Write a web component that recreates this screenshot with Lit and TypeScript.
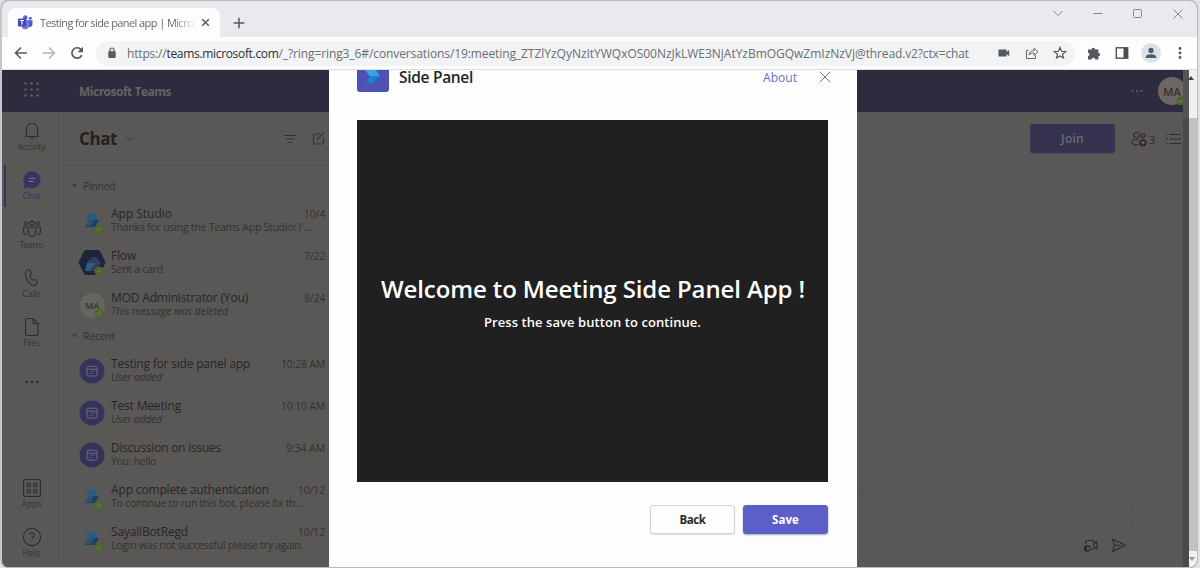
import { LitElement, html, css, svg } from "lit";
import { customElement, property } from "lit/decorators.js";

/** A single line of text, tracked so that it fills the given width. */
@customElement("fit-text")
class FitText extends LitElement {
  static styles = css`
    :host { display: inline-block; white-space: pre; flex: none; }
  `;
  @property({ type: Number }) w = 0;
  @property() text = "";

  render() {
    return html`<span>${this.text}</span>`;
  }
  updated() {
    const span = this.renderRoot.querySelector("span")!;
    span.style.letterSpacing = "0px";
    const natural = span.getBoundingClientRect().width;
    if (this.w) span.style.letterSpacing = `${(this.w - natural) / this.text.length}px`;
  }
}

const t = (text: string, w: number, cls = "") => html`<fit-text class=${cls} .text=${text} .w=${w}></fit-text>`;

const status = html`<svg class="status" width="10" height="10" viewBox="0 0 10 10">
  <circle cx="5" cy="5" r="4.600" fill="#4e662a" />
  <path d="M2.800 5.100l1.600 1.600 2.800-3" fill="none" stroke="#73726c" stroke-width="1.100" />
</svg>`;

const bot = html`<svg width="26" height="26" viewBox="0 0 26 26">
  <path d="M6 5h9l5 7H10z" fill="#2c5c7d" />
  <path d="M10 12h10l-4 7H7l-1-1z" fill="#1d4260" />
  <path d="M10 12h5l-3 6H6z" fill="#28547a" />
</svg>`;

const flow = html`<svg width="28" height="28" viewBox="0 0 28 28">
  <path d="M8 1h12q1.400 0 2 1.200l5 10q.7 1.300 0 2.600l-5 10q-.7 1.200-2 1.200H8q-1.400 0-2-1.200l-5-10q-.7-1.300 0-2.600l5-10Q6.600 1 8 1z" fill="#1b2738" />
  <path d="M14 8h4l5 6-6 8h-4l5-8z" fill="#3a3b60" />
  <path d="M14 8l4 6H9z" fill="#28405f" />
  <path d="M9 14h9l-6 8H7z" fill="#325a7b" />
</svg>`;

const initials = html`<div class="initials">MA</div>`;

const meeting = html`<svg width="26" height="26" viewBox="0 0 26 26">
  <circle cx="13" cy="13" r="12.500" fill="#35335a" />
  <g fill="none" stroke="#6b6986" stroke-width="1">
    <rect x="8" y="8.300" width="10" height="9.700" rx="1.500" />
    <path d="M8 11.200h10" />
    <path d="M12.300 13.300h4M10 15.600h4" stroke-dasharray="1.200 .8" />
  </g>
</svg>`;

interface Chat {
  icon: unknown;
  online?: boolean;
  title: [string, number];
  time: [string, number];
  sub: [string, number];
  italic?: boolean;
}

const pinned: Chat[] = [
  { icon: bot, online: true, title: ["App Studio", 61], time: ["10/4", 21], sub: ["Thanks for using the Teams App Studio! I'...", 200] },
  { icon: flow, online: true, title: ["Flow", 25], time: ["7/22", 21], sub: ["Sent a card", 52] },
  { icon: initials, online: true, title: ["MOD Administrator (You)", 137], time: ["8/24", 21], sub: ["This message was deleted", 117], italic: true },
];

const recent: Chat[] = [
  { icon: meeting, title: ["Testing for side panel app", 139], time: ["10:28 AM", 44], sub: ["User added", 51], italic: true },
  { icon: meeting, title: ["Test Meeting", 70], time: ["10:10 AM", 44], sub: ["User added", 51], italic: true },
  { icon: meeting, title: ["Discussion on issues", 110], time: ["9:34 AM", 39], sub: ["You: hello", 45] },
  { icon: bot, online: true, title: ["App complete authentication", 158], time: ["10/12", 27], sub: ["To continue to run this bot, please fix th...", 192] },
  { icon: bot, online: true, title: ["SayaliBotRegd", 77], time: ["10/12", 27], sub: ["Login was not successful please try again.", 192] },
];

const railIcons = {
  activity: svg`<path d="M4.500 13V8a5.500 5.500 0 0 1 11 0v5l1.200 2.500H3.300z M7.800 15.700a2.300 2.300 0 0 0 4.400 0" />`,
  chat: svg`<path d="M10 1.300a8.500 8.500 0 1 1-4 16L1.600 18.400l1.100-4.200A8.500 8.500 0 0 1 10 1.300z" fill="#37355f" stroke="none" /><path d="M7 8.200h6.500M7 11.400h4" stroke="#777590" />`,
  teams: svg`<circle cx="10" cy="4.300" r="2.200" /><circle cx="4" cy="4.800" r="1.800" /><circle cx="16" cy="4.800" r="1.800" /><path d="M6.300 8.300h7.400v5.500a3.700 3.700 0 0 1-7.400 0zM4.600 8.300H1.500v4.300c0 2 1.300 3 3.200 3M15.400 8.300h3.100v4.300c0 2-1.300 3-3.200 3" />`,
  calls: svg`<path d="M4.500 2.800l2.300-.9q1-.3 1.500.6l1 2.200q.4 1-.3 1.700L7.700 7.700q.8 2.700 2.800 4.500l1.900-.5q1-.2 1.500.6l1.300 1.900q.6.900-.2 1.700-2.200 2.400-4.700 1.500Q5 14.600 3.300 6.600 2.900 3.800 4.500 2.800z" />`,
  files: svg`<path d="M5.500 1.500H11L16 6.500v10a2 2 0 0 1-2 2H5.500a2 2 0 0 1-2-2v-13a2 2 0 0 1 2-2zM11 1.500v5h5" />`,
  apps: svg`<rect x="1.500" y="1.500" width="17" height="17" rx="2" /><rect x="5" y="5" width="3.400" height="3.400" rx="1" /><rect x="11.600" y="5" width="3.400" height="3.400" rx="1" /><rect x="5" y="11.600" width="3.400" height="3.400" rx="1" /><rect x="11.600" y="11.600" width="3.400" height="3.400" rx="1" />`,
  help: svg`<circle cx="10" cy="10" r="8.600" /><path d="M7.600 8a2.400 2.400 0 1 1 3.600 2.100q-1.200.7-1.200 2M10 13.600v1.200" />`,
};

const railItem = (icon: unknown, label: string, w: number, cls = "") => html`
  <div class="rail-item ${cls}">
    <svg class="line" width="20" height="20" viewBox="0 0 20 20">${icon}</svg>
    ${t(label, w, "rail-label")}
  </div>`;

@customElement("app-root")
class AppRoot extends LitElement {
  static styles = css`
    :host { display: block; width: 1200px; height: 568px; overflow: hidden; background: #dfe3e6; font-family: "Open Sans", "Noto Sans", sans-serif; }
    * { box-sizing: border-box; }
    svg { display: block; flex: none; }
    .window { position: relative; width: 1198px; height: 568px; border: 1px solid #b9bbbe; border-left: 2px solid #c4c8cb; border-radius: 8px; overflow: hidden; display: flex; flex-direction: column; background: #5a5856; }

    .tabs { height: 36px; flex: none; background: #e8eaed; display: flex; align-items: flex-start; padding-left: 6px; }
    .tab { width: 212px; height: 29px; margin-top: 7px; background: #fdfdfd; border-radius: 8px 8px 0 0; display: flex; align-items: center; padding-left: 10px; }
    .tab-title { width: 154px; margin-left: 7px; font-size: 11px; color: #66696c; -webkit-mask-image: linear-gradient(90deg, #000 87%, rgba(0, 0, 0, 0.1)); }
    .tab-close { margin-left: 7px; }
    .plus { margin: 16px 0 0 13px; }
    .controls { margin: 6px 13px 0 auto; display: flex; gap: 28px; }

    .toolbar { height: 33px; flex: none; background: #fdfdfd; border-bottom: 1px solid #dcdee0; display: flex; align-items: center; padding: 0 9px 0 12px; }
    .nav { display: flex; gap: 14px; }
    .omnibox { margin-left: 12px; flex: none; width: 979px; height: 25px; background: #f1f3f4; border-radius: 13px; display: flex; align-items: center; padding-left: 11px; }
    .url { display: flex; margin-left: 10px; font-size: 12px; color: #6b6e72; }
    .url .host { color: #2c2e31; }
    .omni-icons { display: flex; gap: 14px; margin-left: auto; padding-right: 8px; }
    .ext { display: flex; flex: none; align-items: center; gap: 12px; margin-left: 12px; }
    .puzzle { margin-right: 2px; }
    .person { width: 20px; height: 20px; border-radius: 50%; background: #dde2e9; display: grid; place-items: center; }

    .viewport { flex: 1; min-height: 0; display: flex; }
    .page { width: 1181px; display: flex; flex-direction: column; background: #5a5856; }
    .strip { width: 6px; background: #4a494a; display: flex; flex-direction: column; }
    .strip-top { height: 48px; background: #555354; }
    .scroll { flex: 1; background: #f1f1f3; display: flex; flex-direction: column; }
    .arrow { margin: 5px 0 37px -3px; }
    .thumb { height: 433px; background: #c2c2c2; }
    .arrow-down { margin: 6px 0 0 -1px; }

    .header { height: 42px; flex: none; background: #2d2b3d; display: flex; align-items: center; color: #6c6a6a; }
    .waffle { margin-left: 21px; margin-top: -2px; }
    .brand { font-size: 12px; font-weight: 700; margin-left: 38px; color: #666464; }
    .more { margin-left: auto; margin-right: 15px; }
    .me { width: 25px; height: 28px; overflow: hidden; position: relative; }
    .me-disc { width: 28px; height: 28px; border-radius: 50%; background: #696864; color: #3f2f2e; font-size: 11px; font-weight: 600; display: grid; place-items: center; }
    .me .status { right: -3px; bottom: -1px; }

    .columns { flex: 1; min-height: 0; display: flex; }
    .rail { width: 58px; border-right: 1px solid #504f55; display: flex; flex-direction: column; padding-top: 9px; color: #302f2e; }
    .rail-item { height: 49px; flex: none; border-left: 2px solid transparent; display: flex; flex-direction: column; align-items: center; margin-left: 1px; padding-right: 1px; }
    .rail-label { font-size: 8.500px; line-height: 12px; color: #343332; }
    .last { height: 40px; }
    .active { position: relative; }
    .active::before { content: ""; position: absolute; left: -1px; top: -5px; width: 2px; height: 42px; background: #36345c; }
    .active .rail-label { color: #343160; }
    .line { fill: none; stroke: currentColor; stroke-width: 1.100; }
    .rail-more { margin: 14px 0 0 22px; }
    .gap { flex: 1; }

    .list { width: 269px; border-left: 1px solid #5f5d5e; display: flex; flex-direction: column; }
    .list-head { height: 54px; flex: none; border-bottom: 1px solid #504f4d; display: flex; align-items: center; padding: 0 4px 0 18px; }
    .list-head h1 { margin: 1px 0 0; font-size: 17px; font-weight: 700; color: #222120; line-height: 24px; }
    .list-head .chev { margin-left: 9px; }
    .filter { margin-left: auto; margin-right: 15px; }
    .section { height: 24px; flex: none; display: flex; align-items: center; padding: 0 0 3px 11px; font-size: 10.500px; color: #333231; }
    .section svg { margin-right: 6px; }
    .first { margin-top: 9px; }
    .chat { height: 42px; flex: none; display: flex; padding-left: 17px; }
    .avatar { position: relative; width: 28px; height: 42px; display: grid; place-items: center; padding-top: 2px; }
    .status { position: absolute; right: 2px; bottom: 7px; }
    .initials { width: 25px; height: 25px; border-radius: 50%; background: #676560; color: #38302f; font-size: 9px; font-weight: 600; display: grid; place-items: center; }
    .body { width: 214px; margin-left: 5px; padding-top: 7px; color: #323130; }
    .row { display: flex; justify-content: space-between; align-items: center; height: 15px; }
    .title { font-size: 12px; color: #272625; line-height: 16px; }
    .time { font-size: 10.500px; line-height: 16px; }
    .sub { font-size: 10.500px; line-height: 13px; height: 13px; display: block; }
    .italic { font-style: italic; }

    .main { flex: 1; display: flex; flex-direction: column; }
    .actions { display: flex; align-items: center; justify-content: flex-end; padding: 12px 2px 0 0; color: #302d2d; }
    .join { width: 85px; height: 29px; border-radius: 3px; background: #35334f; box-shadow: 0 1px 1px #4a4860; color: #6c6a74; font-size: 12px; font-weight: 600; display: grid; place-items: center; margin-right: 16px; }
    .count { font-size: 11px; margin: 2px 11px 0 1px; }
    .compose { margin: auto 50px 0 0; height: 38px; border: 1px dashed #53514f; border-radius: 3px; }
    .send { display: flex; justify-content: flex-end; gap: 12px; padding: 6px 56px 0 0; height: 37px; color: #2d2b2a; }

    .dialog { position: absolute; left: 327px; top: 69px; width: 528px; height: 498px; background: #fdfdfd; padding: 0 28px; display: flex; flex-direction: column; }
    .dialog-head { display: flex; height: 50px; flex: none; }
    .logo { width: 32px; height: 22px; background: #4f52b2; border-radius: 0 0 3px 3px; }
    .dialog-head h2 { margin: -5px 0 0 10px; font-size: 15.500px; line-height: 24px; font-weight: 600; color: #242424; }
    .about { margin: -1px 22px 0 auto; font-size: 12px; line-height: 18px; color: #6672bd; }
    .dlg-close { margin: 1px -2px 0 0; }
    .stage { width: 471px; height: 362px; flex: none; background: #202020; color: #fff; display: flex; flex-direction: column; align-items: center; }
    .stage h3 { margin: 153px 0 0 1px; font-size: 24px; line-height: 32px; font-weight: 600; }
    .stage p { margin: 8px 0 0; font-size: 13px; line-height: 18px; font-weight: 600; }
    .buttons { display: flex; justify-content: flex-end; gap: 8px; padding: 23px 1px 0 0; }
    .btn { width: 85px; height: 29px; border-radius: 3px; display: grid; place-items: center; font-size: 11.500px; font-weight: 700; color: #2a2a2a; background: #fdfdfd; border: 1px solid #d2d2d2; box-shadow: 0 1px 1px #dedede; }
    .primary { background: #5b5fc7; border-color: #5b5fc7; color: #fff; box-shadow: 0 1px 2px #aaa; }
  `;

  chat(c: Chat) {
    return html`<div class="chat">
      <div class="avatar">${c.icon}${c.online ? status : ""}</div>
      <div class="body">
        <div class="row">${t(c.title[0], c.title[1], "title")}${t(c.time[0], c.time[1], "time")}</div>
        ${t(c.sub[0], c.sub[1], c.italic ? "sub italic" : "sub")}
      </div>
    </div>`;
  }

  section(label: string, w: number, cls = "") {
    return html`<div class="section ${cls}">
      <svg width="5" height="4" viewBox="0 0 5 4"><path d="M0 0h5L2.500 4z" fill="#413f3e" /></svg>${t(label, w)}
    </div>`;
  }

  browser() {
    return html`
      <div class="tabs">
        <div class="tab">
          <svg width="15" height="15" viewBox="0 0 15 15">
            <circle cx="7.300" cy="2.600" r="2.300" fill="#5a62c8" /><circle cx="12.300" cy="3.300" r="1.500" fill="#5a62c8" />
            <path d="M10 5.300h4.500v4a2.600 2.600 0 0 1-4.500 1.800z" fill="#5059c9" />
            <path d="M4 5h7.200v5.500a4 4 0 0 1-7.200 2.200z" fill="#7078d8" />
            <rect x="0" y="3.500" width="8" height="8" rx=".8" fill="#434bb0" />
            <path d="M2 5.500h4M4 5.500v4.300" stroke="#fff" stroke-width="1.100" />
          </svg>
          <div class="tab-title">${t("Testing for side panel app | Micro", 153)}</div>
          <svg class="tab-close" width="9" height="9" viewBox="0 0 9 9"><path d="M1.200 1.200l6.600 6.600M7.800 1.200L1.200 7.800" stroke="#55585c" stroke-width="1.400" /></svg>
        </div>
        <svg class="plus" width="12" height="12" viewBox="0 0 12 12"><path d="M6 .7v10.600M.7 6h10.600" stroke="#55585c" stroke-width="1.500" /></svg>
        <div class="controls">
          <svg width="12" height="12" viewBox="0 0 12 12"><path d="M1.500 4L6 8.500 10.500 4" fill="none" stroke="#8b8e91" /></svg>
          <svg width="12" height="12" viewBox="0 0 12 12"><path d="M1.500 6.500h9" stroke="#85888b" /></svg>
          <svg width="12" height="12" viewBox="0 0 12 12"><rect x="1.500" y="2.500" width="8" height="8" rx="1" fill="none" stroke="#85888b" /></svg>
          <svg width="12" height="12" viewBox="0 0 12 12"><path d="M1.500 2.500l9 9M10.500 2.500l-9 9" stroke="#85888b" /></svg>
        </div>
      </div>
      <div class="toolbar">
        <div class="nav">
          <svg width="14" height="14" viewBox="0 0 14 14"><path d="M13 7H2M7 1.500L1.500 7 7 12.500" fill="none" stroke="#55585c" stroke-width="1.600" /></svg>
          <svg width="14" height="14" viewBox="0 0 14 14"><path d="M1 7h11M7 1.500L12.500 7 7 12.500" fill="none" stroke="#b0b2b5" stroke-width="1.400" /></svg>
          <svg width="14" height="14" viewBox="0 0 14 14"><path d="M11.800 9.200a5.200 5.200 0 1 1-.7-5.600" fill="none" stroke="#55585c" stroke-width="1.700" /><path d="M13 .8v5.400H7.600z" fill="#55585c" /></svg>
        </div>
        <div class="omnibox">
          <svg width="10" height="12" viewBox="0 0 10 12"><rect x="1.300" y="4.200" width="7.400" height="6.800" rx=".9" fill="#55585c" /><path d="M3 4.500V3a2 2 0 0 1 4 0v1.500" fill="none" stroke="#55585c" stroke-width="1.200" /></svg>
          <div class="url">
            ${t("https://", 39.5)}${t("teams.microsoft.com", 112, "host")}${t("/_?ring=ring3_6#/conversations/19:meeting_", 242.5)}${t("ZTZlYzQyNzItYWQxOS00NzJkLWE3NjAtYzBmOGQwZmIzNzVj", 334)}${t("@thread.v2?ctx=chat", 114)}
          </div>
          <div class="omni-icons">
            <svg width="14" height="14" viewBox="0 0 14 14"><path d="M1.500 3.500h8v2.600l2.700-2.300v6.400L9.500 7.900v2.600h-8z" fill="#55585c" /></svg>
            <svg width="14" height="14" viewBox="0 0 14 14"><path d="M3.500 4.300h-2v8.200h9V9.300" fill="none" stroke="#66696c" /><path d="M4 9c.4-3 2-4.300 5-4.400V2.200l4 3.600-4 3.600V7C6.800 7 5.300 7.500 4 9z" fill="none" stroke="#66696c" /></svg>
            <svg width="14" height="14" viewBox="0 0 14 14"><path d="M7 1.600l1.600 3.700 4 .3-3.100 2.600 1 3.900L7 10l-3.500 2.100 1-3.900-3.100-2.600 4-.3z" fill="none" stroke="#55585c" stroke-width="1.200" /></svg>
          </div>
        </div>
        <div class="ext">
          <svg class="puzzle" width="14" height="14" viewBox="0 0 14 14"><path d="M1 3.400h3.600a1.700 1.700 0 1 1 3.400 0h3.400v3.500a1.700 1.700 0 1 1 0 3.400v3.200H8.200a1.800 1.800 0 1 0-3.600 0H1v-3.600a1.600 1.600 0 1 0 0-3.200z" fill="#55585c" /></svg>
          <svg width="14" height="14" viewBox="0 0 14 14"><rect x="1.300" y="1.800" width="11.400" height="10.400" fill="none" stroke="#4c5056" stroke-width="1.400" /><rect x="8.500" y="2" width="4" height="10" fill="#4c5056" /></svg>
          <div class="person"><svg width="12" height="12" viewBox="0 0 12 12"><circle cx="6" cy="3.400" r="2.600" fill="#4f5b6b" /><path d="M.8 11V9.700C.8 8 4 7.200 6 7.200s5.200.8 5.200 2.500V11z" fill="#4f5b6b" /></svg></div>
          <svg width="14" height="14" viewBox="0 0 14 14"><g fill="#55585c"><circle cx="7" cy="2.500" r="1.400" /><circle cx="7" cy="7" r="1.400" /><circle cx="7" cy="11.500" r="1.400" /></g></svg>
        </div>
      </div>`;
  }

  render() {
    return html`<div class="window">
      ${this.browser()}
      <div class="viewport">
        <div class="page">
          <div class="header">
            <svg class="waffle" width="18" height="18" viewBox="0 0 18 18" fill="#615f66">
              ${[2.5, 8.5, 14.5].map((y) => [2.5, 8.5, 14.5].map((x) => svg`<circle cx=${x} cy=${y} r="1.200" />`))}
            </svg>
            ${t("Microsoft Teams", 92, "brand")}
            <svg class="more" width="12" height="4" viewBox="0 0 12 4" fill="#6a686c"><circle cx="1.500" cy="2" r=".9" /><circle cx="6" cy="2" r=".9" /><circle cx="10.500" cy="2" r=".9" /></svg>
            <div class="me"><div class="me-disc">MA</div>${status}</div>
          </div>
          <div class="columns">
            <div class="rail">
              ${railItem(railIcons.activity, "Activity", 28)}
              ${railItem(railIcons.chat, "Chat", 18, "active")}
              ${railItem(railIcons.teams, "Teams", 24)}
              ${railItem(railIcons.calls, "Calls", 18)}
              ${railItem(railIcons.files, "Files", 17)}
              <svg class="rail-more" width="16" height="4" viewBox="0 0 16 4" fill="#302f2e"><circle cx="3" cy="2" r="1.200" /><circle cx="8" cy="2" r="1.200" /><circle cx="13" cy="2" r="1.200" /></svg>
              <div class="gap"></div>
              ${railItem(railIcons.apps, "Apps", 20)}
              ${railItem(railIcons.help, "Help", 18, "last")}
            </div>
            <div class="list">
              <div class="list-head">
                <h1>${t("Chat", 38)}</h1>
                <svg class="chev" width="9" height="6" viewBox="0 0 9 6"><path d="M.6.8l3.900 3.900L8.400.8" fill="none" stroke="#3f3632" /></svg>
                <svg class="filter line" width="14" height="12" viewBox="0 0 14 12" color="#353433"><path d="M.8 2.500h12.400M2.800 6h8.400M4.800 9.500h4.400" /></svg>
                <svg class="line" width="13" height="13" viewBox="0 0 13 13" color="#353433"><path d="M7.500 2H3a1.500 1.500 0 0 0-1.500 1.500v7A1.500 1.500 0 0 0 3 12h7a1.500 1.500 0 0 0 1.500-1.500V6M5.300 8.200l.4-1.500L11.500 1" /></svg>
              </div>
              ${this.section("Pinned", 32, "first")}
              ${pinned.map((c) => this.chat(c))}
              ${this.section("Recent", 32)}
              ${recent.map((c) => this.chat(c))}
            </div>
            <div class="main">
              <div class="actions">
                <div class="join">${t("Join", 23)}</div>
                <svg class="line" width="17" height="16" viewBox="0 0 17 16"><circle cx="5.500" cy="4" r="2.800" /><circle cx="12" cy="4.600" r="2" /><path d="M8 8.800H2.300Q1 8.800 1 10q0 3.800 4.500 4 1.500 0 2.500-.4" /><circle cx="12" cy="11.800" r="3.600" fill="#302524" stroke="none" /><path d="M12 10v3.600M10.200 11.800h3.600" stroke="#77706e" /></svg>
                ${t("3", 6, "count")}
                <svg class="line" width="15" height="12" viewBox="0 0 15 12"><path d="M3.500 1.500H15M3.500 6H15M3.500 10.500H15M.5 1.500h1.300M.5 6h1.300M.5 10.500h1.300" /></svg>
              </div>
              <div class="compose"></div>
              <div class="send">
                <svg class="line" width="16" height="18" viewBox="0 0 16 18"><path d="M2.500 8V6A1.500 1.500 0 0 1 4 4.500h5.500A1.500 1.500 0 0 1 11 6v6a1.500 1.500 0 0 1-1.500 1.500H8M11 7.500l3-1.700v7L11 11" /><circle cx="4.200" cy="12.500" r="3.200" fill="#2a2524" stroke="none" /><path d="M4 11l1.800 1.500L4 14" stroke="#777" /></svg>
                <svg class="line" width="16" height="18" viewBox="0 0 16 18"><path d="M1.500 3L14.500 9.300 1.500 15.500 3.500 9.300zM3.500 9.300h7" /></svg>
              </div>
            </div>
          </div>
        </div>
        <div class="strip"><div class="strip-top"></div></div>
        <div class="scroll">
          <svg class="arrow" width="10" height="6" viewBox="0 0 10 6"><path d="M2 5l3-4 3 4z" fill="#444" /></svg>
          <div class="thumb"></div>
          <svg class="arrow-down" width="8" height="5" viewBox="0 0 8 5"><path d="M1 0h6L4 4z" fill="#9a9a9a" /></svg>
        </div>
      </div>
      <div class="dialog">
        <div class="dialog-head">
          <div class="logo"><svg width="32" height="22" viewBox="0 0 32 22"><path d="M8 0h11l4 6.500H13z" fill="#3aa0e8" /><path d="M13 6.500h10L18.500 13H9z" fill="#1372c8" /><path d="M13 6.500h6l-3 6.500H9z" fill="#2080d0" /></svg></div>
          <h2>${t("Side Panel", 74)}</h2>
          ${t("About", 34, "about")}
          <svg class="dlg-close" width="12" height="12" viewBox="0 0 12 12"><path d="M.7.7l10.600 10.600M11.300.7L.7 11.300" stroke="#77797c" /></svg>
        </div>
        <div class="stage">
          <h3>${t("Welcome to Meeting Side Panel App !", 424)}</h3>
          <p>${t("Press the save button to continue.", 217)}</p>
        </div>
        <div class="buttons">
          <div class="btn">${t("Back", 26)}</div>
          <div class="btn primary">${t("Save", 27)}</div>
        </div>
      </div>
    </div>`;
  }
}
